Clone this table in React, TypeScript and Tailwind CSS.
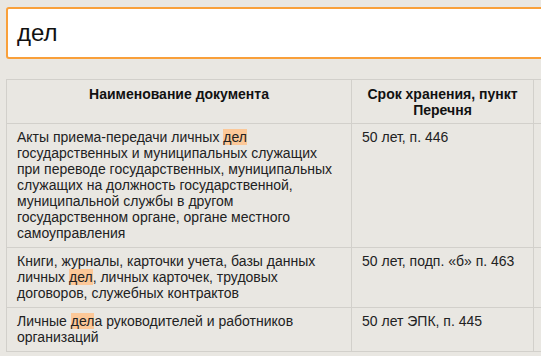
import React from "react";

const H = ({ children }: { children: React.ReactNode }) => (
  <span className="bg-[#fcc898]">{children}</span>
);

export default function App() {
  return (
    <div
      className="w-[541px] h-[356px] overflow-hidden bg-[#e9e7e2] pt-[7px] pl-[6px]"
      style={{ fontFamily: '"Liberation Sans", Arial, sans-serif' }}
    >
      <div className="w-[600px] h-[52px] border-2 border-[#f9a03a] rounded-[3px] bg-white flex items-center pl-[9px]">
        <span className="text-[24px] text-[#111] leading-none">дел</span>
      </div>
      <table className="mt-[20px] w-[600px] border-collapse text-[14px] leading-[16px] text-[#222] table-fixed">
        <colgroup>
          <col className="w-[345px]" />
          <col className="w-[182px]" />
          <col />
        </colgroup>
        <thead>
          <tr>
            <th className="border border-[#d2d0cb] px-[10px] pt-[6px] pb-[5px] align-top font-bold text-center text-[#111]">
              Наименование документа
            </th>
            <th className="border border-[#d2d0cb] px-[10px] pt-[6px] pb-[5px] align-top font-bold text-center text-[#111]">
              Срок хранения, пункт Перечня
            </th>
            <th className="border border-[#d2d0cb]"></th>
          </tr>
        </thead>
        <tbody>
          <tr>
            <td className="border border-[#d2d0cb] px-[10px] pt-[5px] pb-[6px] align-top">
              Акты приема-передачи личных <H>дел</H> государственных и муниципальных служащих при переводе государственных, муниципальных служащих на должность государственной, муниципальной службы в другом государственном органе, органе местного самоуправления
            </td>
            <td className="border border-[#d2d0cb] px-[10px] pt-[5px] pb-[6px] align-top">
              50 лет, п. 446
            </td>
            <td className="border border-[#d2d0cb]"></td>
          </tr>
          <tr>
            <td className="border border-[#d2d0cb] px-[10px] pt-[5px] pb-[6px] align-top">
              Книги, журналы, карточки учета, базы данных личных <H>дел</H>, личных карточек, трудовых договоров, служебных контрактов
            </td>
            <td className="border border-[#d2d0cb] px-[10px] pt-[5px] pb-[6px] align-top">
              50 лет, подп. «б» п. 463
            </td>
            <td className="border border-[#d2d0cb]"></td>
          </tr>
          <tr>
            <td className="border border-[#d2d0cb] px-[10px] pt-[5px] pb-[6px] align-top">
              Личные <H>дел</H>а руководителей и работников организаций
            </td>
            <td className="border border-[#d2d0cb] px-[10px] pt-[5px] pb-[6px] align-top">
              50 лет ЭПК, п. 445
            </td>
            <td className="border border-[#d2d0cb]"></td>
          </tr>
        </tbody>
      </table>
    </div>
  );
}
